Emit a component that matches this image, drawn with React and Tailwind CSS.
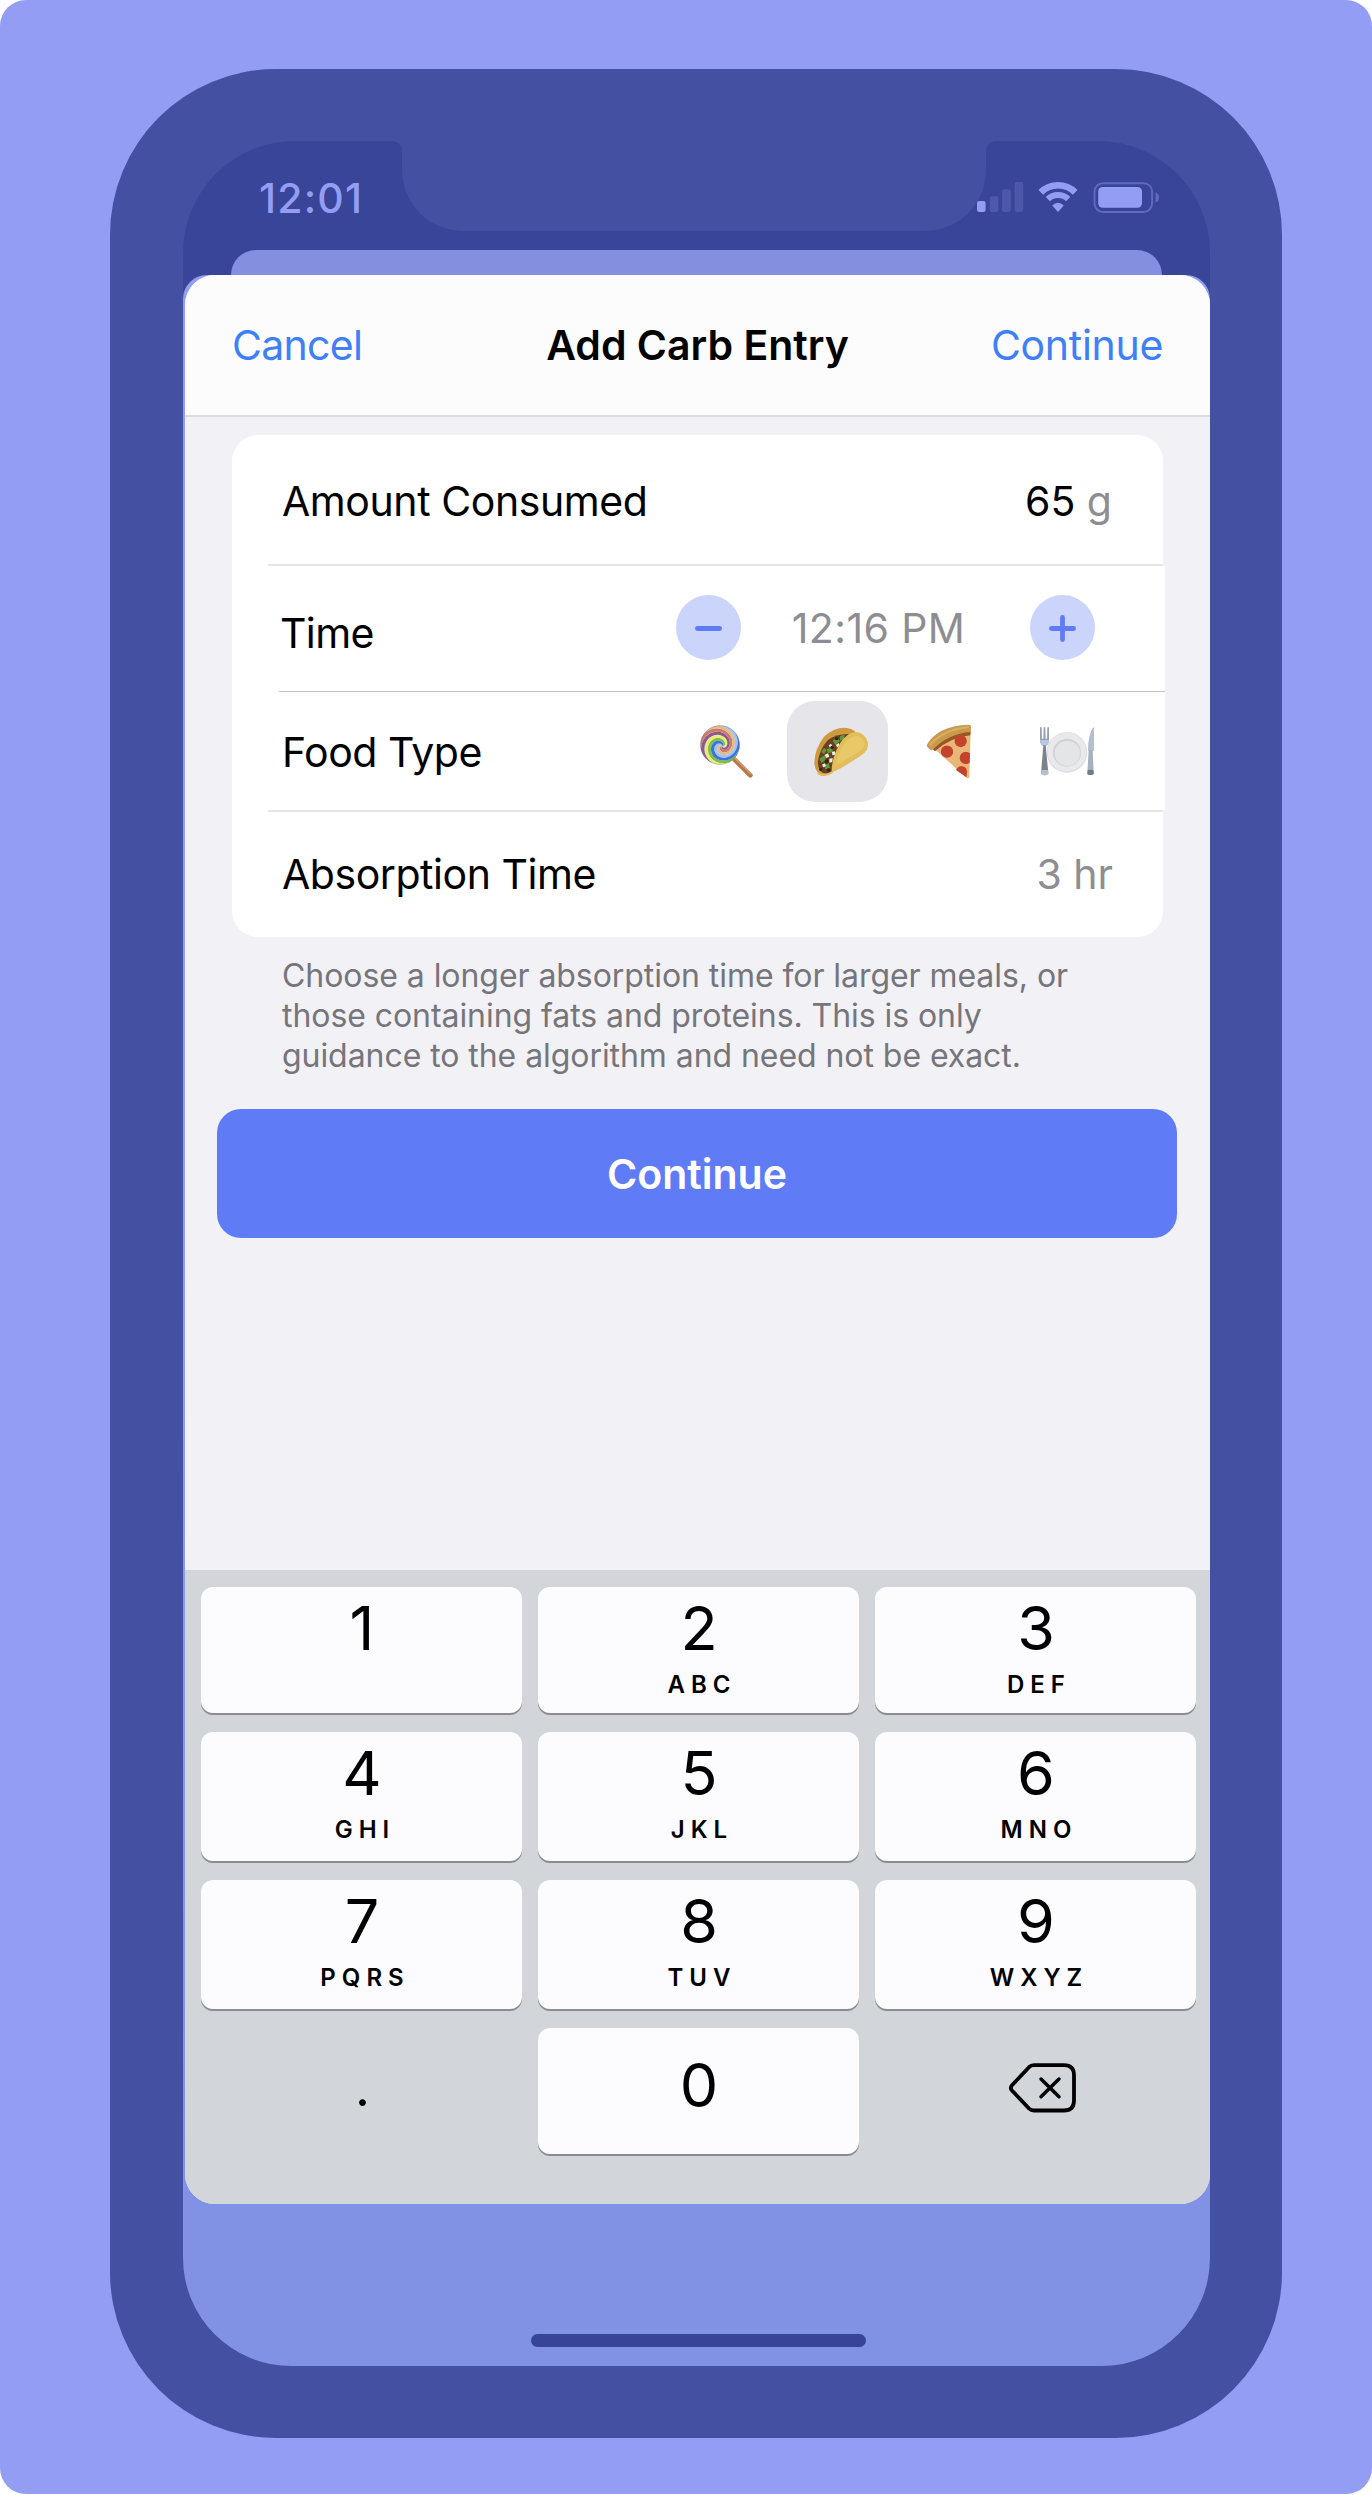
import clsx from "clsx";

const KEY_ROWS = [
  {
    height: "h-[126px]",
    keys: [
      ["1", ""],
      ["2", "ABC"],
      ["3", "DEF"],
    ],
  },
  {
    height: "h-[129px]",
    keys: [
      ["4", "GHI"],
      ["5", "JKL"],
      ["6", "MNO"],
    ],
  },
  {
    height: "h-[129px]",
    keys: [
      ["7", "PQRS"],
      ["8", "TUV"],
      ["9", "WXYZ"],
    ],
  },
];

const SWIRL = ["#7fbf4a", "#e9ec7c", "#8c5b8e", "#cf7b6c", "#e6b98c", "#9cc8f0", "#3f70dd"];

// One coloured ribbon of the lollipop, twisting from the rim to the centre.
function ribbon(index) {
  const step = 360 / SWIRL.length;
  const point = (start, t) => {
    const angle = ((start + (1 - t) * 330) * Math.PI) / 180;
    const x = 120 + 7 * (1 - t) + 59 * t * Math.cos(angle);
    const y = 165 + 4 * (1 - t) + 59 * t * Math.sin(angle);
    return `${x.toFixed(1)} ${y.toFixed(1)}`;
  };
  const start = 10 + index * step;
  const points = [];
  for (let i = 0; i <= 24; i++) points.push(point(start, i / 24));
  for (let i = 1; i < 6; i++) points.push(point(start + (step * i) / 6, 1));
  for (let i = 24; i >= 0; i--) points.push(point(start + step + 1, i / 24));
  return `M${points.join("L")}Z`;
}

function Lollipop() {
  return (
    <svg viewBox="-15 33 303 303" className="size-full">
      <path d="M160 205L211 256" stroke="#b9784c" strokeWidth="14" strokeLinecap="round" />
      <path d="M163 203L213 252" stroke="#d79a6b" strokeWidth="4" strokeLinecap="round" />
      {SWIRL.map((color, i) => (
        <path key={color} d={ribbon(i)} fill={color} />
      ))}
      <circle cx="120" cy="165" r="58" fill="none" stroke="#5a6fb0" strokeOpacity="0.35" strokeWidth="3" />
    </svg>
  );
}

function Taco() {
  return (
    <svg viewBox="321 33 303 303" className="size-full">
      <path d="M432 258Q408 254 403 222Q402 180 432 140Q460 113 494 113Q516 114 526 126L470 240Z" fill="#cf9a3e" />
      <path d="M428 248Q412 236 414 212Q420 176 444 150Q466 132 506 132L458 244Q444 254 428 248Z" fill="#6b3f22" />
      <g fill="#5c9a3c">
        <path d="M418 206l16-10 4 14-14 8zM440 178l14-6 6 14-16 4zM458 152l14-10 8 12-14 10zM480 138l14-4-2 14-12 4zM432 226l14-6 4 14-14 4zM424 186l8-12 8 6-8 12z" />
      </g>
      <g fill="#eef0e4">
        <path d="M434 194l10-4 4 10-10 4zM456 186l9-2 1 10-9 2zM448 206l10-2-1 12-9 2zM426 224l8-4 4 8-8 4zM468 164l8-5 3 8-8 5zM446 166l7-5 4 7-7 5z" />
      </g>
      <g fill="#3c2113">
        <circle cx="470" cy="146" r="5" />
        <circle cx="440" cy="214" r="6" />
        <circle cx="456" cy="172" r="5" />
        <circle cx="422" cy="238" r="5" />
        <circle cx="446" cy="240" r="5" />
      </g>
      <path d="M455 247Q454 205 480 160Q500 129 526 126Q554 127 563 156Q567 176 552 190Q534 204 500 224Q476 240 455 247Z" fill="#e2bd59" />
      <path d="M466 226Q476 180 500 152Q516 138 532 138Q550 142 554 162Q552 178 530 190Z" fill="#e9c869" />
      <path d="M415 250Q432 262 456 247" stroke="#e4bd5c" strokeWidth="6" fill="none" strokeLinecap="round" />
    </svg>
  );
}

function Pizza() {
  return (
    <svg viewBox="0 33 303 303" className="size-full">
      <path d="M98 172Q146 128 212 122L208 262Q204 268 198 262Z" fill="#e9b878" />
      <path d="M92 172Q140 128 212 122L211 136Q150 142 105 184Z" fill="#9a5527" />
      <path d="M80 165Q112 108 204 104Q214 104 213 112L212 126Q146 130 96 181Q84 178 80 165Z" fill="#c99a4c" />
      <path d="M92 164Q128 120 204 112" stroke="#d9b165" strokeWidth="6" fill="none" strokeLinecap="round" />
      <g fill="#c4432c">
        <circle cx="141" cy="185" r="18.500" />
        <circle cx="182" cy="153" r="18.500" />
        <path d="M210 190a18.500 18.500 0 1 0-1 28zM168 240a17 17 0 0 1 33 6l-2 16z" />
      </g>
    </svg>
  );
}

function PlaceSetting() {
  return (
    <svg viewBox="348 33 303 303" className="size-full">
      <circle cx="501" cy="187" r="61" fill="#dcdde0" />
      <circle cx="501" cy="186" r="58" fill="#e9e9eb" />
      <circle cx="501" cy="188" r="42" fill="#cfd2d8" />
      <circle cx="502" cy="190" r="38" fill="#e4e5e7" />
      <path d="M420 112h5l1 34h4l1-34h5l1 34h4l1-34h5v38q0 14-9 18h-9q-9-4-9-18z" fill="#98a0aa" />
      <path d="M421 150h25q0 14-8 18h-9q-8-4-8-18z" fill="#b6c8e4" />
      <path d="M430 166h7l8 84q-2 6-11 6t-11-6z" fill="#7c828b" />
      <path d="M424 240h20l1 11q-3 5-11 5t-11-5z" fill="#b4bfd2" />
      <path d="M580 112q2 0 2 4v66h-18q0-50 16-70z" fill="#b3c0cd" />
      <path d="M566 180h12l3 71q-2 4-10 4t-9-4z" fill="#a5b0c0" />
      <path d="M563 240h17l1 12q-3 3-10 3t-9-3z" fill="#737a86" />
    </svg>
  );
}

const FOODS = [
  { Icon: Lollipop, label: "Fast", className: "" },
  { Icon: Taco, label: "Medium", className: "ml-[11px] bg-[#e5e5ea]" },
  { Icon: Pizza, label: "Slow", className: "ml-[12px]" },
  { Icon: PlaceSetting, label: "Custom", className: "ml-[15px]" },
];

function StatusIcons() {
  return (
    <svg width="184" height="32" viewBox="0 0 184 32" className="ml-auto mr-[50px] mt-[40px]" fill="none">
      <rect x="1" y="20" width="8.6" height="11" rx="2" fill="#929df3" />
      <rect x="13.7" y="15.3" width="8.6" height="15.7" rx="2" fill="#4d58aa" />
      <rect x="26.2" y="8.3" width="8.6" height="22.7" rx="2" fill="#4d58aa" />
      <rect x="38.6" y="1" width="8.6" height="30" rx="2" fill="#4d58aa" />
      <g transform="translate(82 0)">
        <path d="M-17.2 11.3a24.500 24.500 0 0 1 34.4 0" stroke="#929df3" strokeWidth="6.6" />
        <path d="M-10.2 18.2a14.6 14.6 0 0 1 20.4 0" stroke="#929df3" strokeWidth="6" />
        <path d="M0 31l-5.8-6.4q5.8-5.6 11.6 0z" fill="#929df3" />
      </g>
      <rect x="118.5" y="2.2" width="57.6" height="28.8" rx="8.5" stroke="#606bc0" strokeWidth="1.9" />
      <rect x="122.2" y="6" width="43.8" height="20.8" rx="4.5" fill="#929df3" />
      <path d="M179.5 11.5q3.6 1.4 3.6 5t-3.6 5z" fill="#606bc0" />
    </svg>
  );
}

function StatusBar() {
  return (
    <div className="relative flex h-[109px] shrink-0">
      <div className="absolute left-[219px] top-0 h-[90px] w-[584px] rounded-b-[61px] bg-[#4450a2]" />
      <div className="absolute left-[210px] top-0 size-[9px] bg-[radial-gradient(circle_at_0_100%,#394599_8.5px,#4450a2_9px)]" />
      <div className="absolute left-[803px] top-0 size-[9px] bg-[radial-gradient(circle_at_100%_100%,#394599_8.5px,#4450a2_9px)]" />
      <div className="relative flex w-full">
        <span className="ml-[76px] mt-[32px] h-[50px] text-[41px] leading-[50px] font-medium tracking-[1.2px] text-[#929df3]">
          12:01
        </span>
        <StatusIcons />
      </div>
    </div>
  );
}

function StepButton({ plus }) {
  return (
    <button className="flex size-[65px] shrink-0 items-center justify-center rounded-full bg-[#cbd4fb]">
      <svg width="29" height="29" viewBox="0 0 29 29" stroke="#5f7cf6" strokeWidth="4.8" strokeLinecap="round" className="mt-0.5">
        <path d={plus ? "M3.4 14.5h22.2M14.5 3.4v22.2" : "M3.4 14.5h22.2"} />
      </svg>
    </button>
  );
}

function EntryCard() {
  return (
    <div className="mx-[47px] mt-[18px] h-[502px] rounded-[26px] bg-white text-[41px] leading-[50px] text-black">
      <div className="flex h-[129px] items-center justify-between pl-[50px] pr-[51px] pt-0.5">
        <span className="tracking-[-0.42px]">Amount Consumed</span>
        <span>
          65 <span className="text-[#8e8e92]">g</span>
        </span>
      </div>
      <div className="ml-[36px] h-0.5 bg-[#e6e6e8]" />
      <div className="-mr-0.5 flex h-[125px] items-center bg-white pl-[48px] pr-[70px]">
        <span className="pt-2 tracking-[-0.6px]">Time</span>
        <div className="-mt-0.5 ml-auto flex items-center">
          <StepButton />
          <span className="w-[289px] pr-3.5 text-center tracking-[0.4px] text-[#8e8e92]">12:16 PM</span>
          <StepButton plus />
        </div>
      </div>
      <div className="-mr-0.5 ml-[47px] h-px bg-[#c4c4c6]" />
      <div className="-mr-0.5 flex h-[118px] items-center bg-white pl-[50px] pr-[48px]">
        <span className="pt-px tracking-[-0.5px]">Food Type</span>
        <div className="ml-auto flex">
          {FOODS.map(({ Icon, label, className }) => (
            <button key={label} aria-label={label} className={clsx("size-[101px] rounded-[28px]", className)}>
              <Icon />
            </button>
          ))}
        </div>
      </div>
      <div className="ml-[36px] h-0.5 bg-[#e6e6e8]" />
      <div className="flex h-[124px] items-center justify-between pl-[50px] pr-[50px]">
        <span className="tracking-[-0.45px]">Absorption Time</span>
        <span className="text-[#8e8e92]">3 hr</span>
      </div>
    </div>
  );
}

function Key({ digit, letters, height }) {
  return (
    <button
      className={clsx(
        "flex w-[321px] flex-col items-center rounded-xl bg-[#fcfcfe] pt-[11px] text-black shadow-[0_2px_0_#8a8b8e]",
        height
      )}
    >
      <span className="pl-px text-[61px] leading-[60px]">{digit}</span>
      <span className="mt-[15px] pl-[7px] text-[24px] leading-[24px] font-semibold tracking-[6px]">{letters}</span>
    </button>
  );
}

function Keypad() {
  return (
    <div className="mt-auto flex h-[634px] flex-col bg-[#d2d5da] pl-4 pt-[17px]">
      <div className="flex flex-col gap-[19px]">
        {KEY_ROWS.map((row) => (
          <div key={row.keys[0][0]} className="flex gap-4">
            {row.keys.map(([digit, letters]) => (
              <Key key={digit} digit={digit} letters={letters} height={row.height} />
            ))}
          </div>
        ))}
        <div className="flex gap-4">
          <div className="flex h-[126px] w-[321px] justify-center pl-0.5 pt-[30px] text-[52px] leading-[60px] text-black">.</div>
          <button className="flex h-[126px] w-[321px] justify-center rounded-xl bg-[#fcfcfe] pl-px pt-[27px] text-[61px] leading-[60px] text-black shadow-[0_2px_0_#8a8b8e]">
            0
          </button>
          <button aria-label="Delete" className="flex h-[126px] w-[321px] pl-[133px] pt-[34px]">
            <svg width="70" height="52" viewBox="0 0 70 52" fill="none" stroke="#000" strokeLinecap="round" strokeLinejoin="round">
              <path
                d="M26 3.2H56q10 0 10 10V38.500q0 10-10 10H26q-3 0-5-2L4 28.500q-2.300-2.600 0-5.200L21 5.200q2-2 5-2z"
                strokeWidth="3.800"
              />
              <path d="M33 17l18 17.700M51 17l-18 17.700" strokeWidth="3.500" />
            </svg>
          </button>
        </div>
      </div>
    </div>
  );
}

function Sheet() {
  return (
    <div className="ml-0.5 flex h-[1929px] flex-col overflow-hidden rounded-[30px] bg-[#f2f1f6]">
      <div className="flex h-[142px] shrink-0 items-center border-b-2 border-[#dcdce0] bg-[#fcfcfc] px-[47px] text-[41px] leading-[50px]">
        <button className="flex-1 text-left tracking-[-0.7px] text-[#3f7ff7]">Cancel</button>
        <h1 className="font-semibold text-black">Add Carb Entry</h1>
        <button className="flex-1 text-right tracking-[-0.3px] text-[#3f7ff7]">Continue</button>
      </div>
      <EntryCard />
      <p className="ml-[97px] mt-[19px] w-[820px] text-[32px] leading-[40px] tracking-[-0.06px] text-[#76757b]">
        Choose a longer absorption time for larger meals, or
        <br />
        those containing fats and proteins. This is only
        <br />
        guidance to the algorithm and need not be exact.
      </p>
      <button className="ml-[32px] mt-[33px] h-[129px] w-[960px] shrink-0 rounded-3xl bg-[#5f7cf6] text-[41px] leading-[50px] font-semibold text-white">
        Continue
      </button>
      <Keypad />
    </div>
  );
}

export default function App() {
  return (
    <div className="h-[2495px] w-[1372px] bg-white font-['Inter',sans-serif]">
      <div className="h-[2494px] rounded-[26px] bg-[#929df3] pl-[110px] pt-[69px]">
        <div className="h-[2369px] w-[1172px] rounded-[166px] bg-[#4450a2] pl-[73px] pt-[72px]">
          <div className="flex h-[2225px] w-[1027px] flex-col overflow-hidden rounded-t-[112px] rounded-b-[108px] bg-[#394599]">
            <StatusBar />
            <div className="mx-auto h-[25px] w-[931px] shrink-0 rounded-t-[25px] bg-[#848fe0]" />
            <div className="h-[1929px] shrink-0 rounded-t-3xl bg-linear-to-b from-[#929df3] via-[#929df3] to-[#8191e3]">
              <Sheet />
            </div>
            <div className="flex flex-1 items-end justify-center bg-[#8191e3] pb-[19px] pl-[4px]">
              <div className="h-[13px] w-[335px] rounded-full bg-[#374498]" />
            </div>
          </div>
        </div>
      </div>
    </div>
  );
}
